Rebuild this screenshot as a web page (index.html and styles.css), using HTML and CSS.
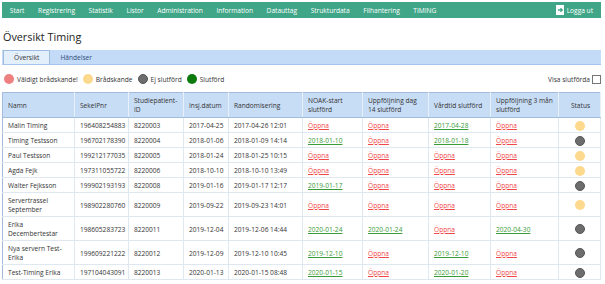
FILE: index.html
```html
<!DOCTYPE html>
<html lang="sv">
<head>
<meta charset="utf-8">
<title>Översikt Timing</title>
<link rel="stylesheet" href="styles.css">
</head>
<body>
<nav class="topnav">
  <div class="menu">
    <a class="nav-item">Start</a>
    <a class="nav-item">Registrering</a>
    <a class="nav-item">Statistik</a>
    <a class="nav-item">Listor</a>
    <a class="nav-item">Administration</a>
    <a class="nav-item">Information</a>
    <a class="nav-item">Datauttag</a>
    <a class="nav-item">Strukturdata</a>
    <a class="nav-item">Filhantering</a>
    <a class="nav-item">TIMING</a>
  </div>
  <a class="logout">
    <svg class="logout-icon" width="9" height="10" viewBox="0 0 9 10"><rect x="0.5" y="0.5" width="7" height="9" fill="#fff" stroke="#fff"/><path d="M2 5H6M4.5 3.2L6.3 5L4.5 6.8" fill="none" stroke="#41a688" stroke-width="1.3"/></svg>
    <span>Logga ut</span>
  </a>
</nav>

<h1 class="title">Översikt Timing</h1>

<div class="tabs">
  <div class="tab active">Översikt</div>
  <div class="tab">Händelser</div>
</div>

<div class="legend-row">
  <div class="legend">
    <span class="dot red"></span><span class="legend-label">Väldigt brådskande!</span>
    <span class="dot yellow"></span><span class="legend-label">Brådskande</span>
    <span class="dot gray"></span><span class="legend-label">Ej slutförd</span>
    <span class="dot green"></span><span class="legend-label">Slutförd</span>
  </div>
  <label class="show-done">Visa slutförda <span class="checkbox"></span></label>
</div>

<table class="grid">
  <colgroup>
    <col style="width:72px"><col style="width:54px"><col style="width:55px"><col style="width:45px"><col style="width:74px"><col style="width:60px"><col style="width:66px"><col style="width:62px"><col style="width:68px"><col style="width:42px">
  </colgroup>
  <thead>
    <tr>
      <th>Namn</th><th>SekelPnr</th><th>Studiepatient-<br>ID</th><th>Insj.datum</th><th>Randomisering</th><th>NOAK-start<br>slutförd</th><th>Uppföljning dag<br>14 slutförd</th><th>Vårdtid slutförd</th><th>Uppföljning 3 mån<br>slutförd</th><th class="center">Status</th>
    </tr>
  </thead>
  <tbody>
    <tr><td>Malin Timing</td><td>196408254883</td><td>8220003</td><td>2017-04-25</td><td>2017-04-26 12:01</td><td><a class="open">Öppna</a></td><td><a class="open">Öppna</a></td><td><a class="done">2017-04-28</a></td><td><a class="open">Öppna</a></td><td class="center"><span class="dot yellow"></span></td></tr>
    <tr><td>Timing Testsson</td><td>196702178390</td><td>8220004</td><td>2018-01-06</td><td>2018-01-09 14:14</td><td><a class="done">2018-01-10</a></td><td><a class="open">Öppna</a></td><td><a class="done">2018-01-18</a></td><td><a class="open">Öppna</a></td><td class="center"><span class="dot gray"></span></td></tr>
    <tr><td>Paul Testsson</td><td>199212177035</td><td>8220005</td><td>2018-01-24</td><td>2018-01-25 10:15</td><td><a class="open">Öppna</a></td><td><a class="open">Öppna</a></td><td><a class="open">Öppna</a></td><td><a class="open">Öppna</a></td><td class="center"><span class="dot yellow"></span></td></tr>
    <tr><td>Agda Fejk</td><td>197311055722</td><td>8220006</td><td>2018-10-10</td><td>2018-10-10 13:49</td><td><a class="open">Öppna</a></td><td><a class="open">Öppna</a></td><td><a class="open">Öppna</a></td><td><a class="open">Öppna</a></td><td class="center"><span class="dot yellow"></span></td></tr>
    <tr><td>Walter Fejksson</td><td>199902193193</td><td>8220008</td><td>2019-01-16</td><td>2019-01-17 12:17</td><td><a class="done">2019-01-17</a></td><td><a class="open">Öppna</a></td><td><a class="open">Öppna</a></td><td><a class="open">Öppna</a></td><td class="center"><span class="dot gray"></span></td></tr>
    <tr><td>Servertrassel September</td><td>198902280760</td><td>8220009</td><td>2019-09-22</td><td>2019-09-23 14:01</td><td><a class="open">Öppna</a></td><td><a class="open">Öppna</a></td><td><a class="open">Öppna</a></td><td><a class="open">Öppna</a></td><td class="center"><span class="dot yellow"></span></td></tr>
    <tr><td>Erika Decembertestar</td><td>198605283723</td><td>8220011</td><td>2019-12-04</td><td>2019-12-06 14:44</td><td><a class="done">2020-01-24</a></td><td><a class="done">2020-01-24</a></td><td><a class="open">Öppna</a></td><td><a class="done">2020-04-30</a></td><td class="center"><span class="dot gray"></span></td></tr>
    <tr><td>Nya servern Test-Erika</td><td>199609221222</td><td>8220012</td><td>2019-12-09</td><td>2019-12-10 10:45</td><td><a class="done">2019-12-10</a></td><td><a class="open">Öppna</a></td><td><a class="done">2019-12-10</a></td><td><a class="open">Öppna</a></td><td class="center"><span class="dot gray"></span></td></tr>
    <tr><td>Test-Timing Erika</td><td>197104043091</td><td>8220013</td><td>2020-01-13</td><td>2020-01-15 08:48</td><td><a class="done">2020-01-15</a></td><td><a class="open">Öppna</a></td><td><a class="done">2020-01-20</a></td><td><a class="open">Öppna</a></td><td class="center"><span class="dot gray"></span></td></tr>
  </tbody>
</table>
</body>
</html>
```

FILE: styles.css
```css
html, body {
  margin: 0;
  padding: 0;
  background: #fff;
}
body {
  font-family: "Open Sans", "Noto Sans", sans-serif;
  font-size: 6.6px;
  color: #333;
  padding: 2px 4px 0 2px;
}
.topnav {
  display: flex;
  justify-content: space-between;
  align-items: center;
  height: 16px;
  background: #41a688;
  color: #fff;
  padding: 0 8px 0 1px;
}
.menu {
  display: flex;
}
.nav-item {
  padding: 0 6.8px;
  color: #fff;
}
.logout {
  display: flex;
  align-items: center;
  gap: 2px;
  color: #fff;
}
.logout-icon {
  display: block;
}
.title {
  font-size: 10.8px;
  font-weight: normal;
  line-height: 14px;
  margin: 12px 0 0 1px;
  color: #222;
}
.tabs {
  display: flex;
  align-items: flex-end;
  height: 15px;
  margin-top: 6px;
  background: #c4dbf8;
  border-bottom: 1px solid #a7c5ec;
  box-sizing: border-box;
  padding-left: 1px;
}
.tab {
  height: 13px;
  line-height: 13px;
  padding: 0 10px;
  color: #2f4f7a;
}
.tab.active {
  background: #e4effc;
  border: 1px solid #9ebcdf;
  border-bottom: none;
  color: #333;
}
.legend-row {
  display: flex;
  justify-content: space-between;
  align-items: center;
  margin-top: 8px;
  height: 12px;
}
.legend {
  display: flex;
  align-items: center;
  padding-left: 2px;
}
.legend-label {
  margin: 0 5px 0 3px;
  color: #333;
}
.dot {
  display: inline-block;
  width: 10px;
  height: 10px;
  border-radius: 50%;
  box-sizing: border-box;
  vertical-align: middle;
}
.dot.red { background: #ef8080; }
.dot.yellow { background: #fcd98c; }
.dot.gray { background: #6d6d6d; border: 1px solid #555; }
.dot.green { background: #0c7a0c; }
.show-done {
  display: flex;
  align-items: center;
  gap: 2px;
  color: #333;
}
.checkbox {
  display: inline-block;
  width: 7px;
  height: 7px;
  border: 1px solid #777;
  background: #fff;
}
.grid {
  margin-top: 7px;
  border-collapse: collapse;
  table-layout: fixed;
  width: 598px;
  border: 1px solid #a3bcdc;
}
.grid th {
  background: #c7dcf5;
  font-weight: normal;
  text-align: left;
  line-height: 9px;
  padding: 3px 3px 3px 5px;
  height: 18px;
  border-right: 1px solid #e8f0fb;
  border-bottom: 1px solid #a3bcdc;
  color: #333;
  white-space: nowrap;
}
.grid td {
  line-height: 9px;
  padding: 3px 2px 2px 5px;
  border-right: 1px solid #dfe7f1;
  border-bottom: 1px solid #dfe7f1;
  color: #333;
}
.grid .center {
  text-align: center;
}
.grid td.center {
  padding: 2px 0 1px 0;
}
.grid td .dot {
  vertical-align: middle;
}
.open {
  color: #f04848;
  text-decoration: underline;
}
.done {
  color: #3a9b3a;
  text-decoration: underline;
}
```
